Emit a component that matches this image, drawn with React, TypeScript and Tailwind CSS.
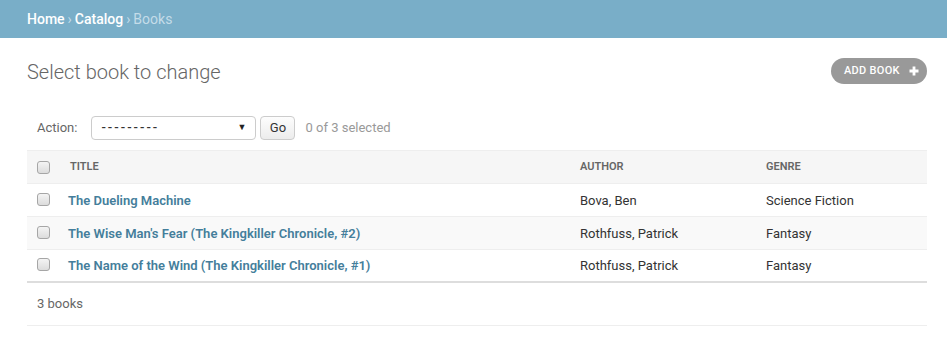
import React from "react";

const Check = () => (
  <span className="inline-block w-[13px] h-[13px] rounded-[3px] border border-[#a6a6a6] bg-gradient-to-b from-[#f4f4f4] to-[#dcdcdc]" />
);

const rows = [
  { title: "The Dueling Machine", author: "Bova, Ben", genre: "Science Fiction" },
  { title: "The Wise Man's Fear (The Kingkiller Chronicle, #2)", author: "Rothfuss, Patrick", genre: "Fantasy" },
  { title: "The Name of the Wind (The Kingkiller Chronicle, #1)", author: "Rothfuss, Patrick", genre: "Fantasy" },
];

export default function App() {
  return (
    <div className="w-[947px] h-[337px] bg-white font-['Roboto',sans-serif] overflow-hidden">
      <div className="h-[38px] bg-[#79aec8] px-[27px] flex items-center text-[14px] text-white">
        <span className="font-medium">Home</span>
        <span className="text-[#c4dce8] mx-[3px]">›</span>
        <span className="font-medium">Catalog</span>
        <span className="text-[#c4dce8] mx-[3px]">›</span>
        <span className="text-[#c4dce8]">Books</span>
      </div>
      <div className="pl-[27px] pr-[20px]">
        <div className="mt-[20px] h-[26px] flex items-center justify-between">
          <h1 className="text-[20px] font-light text-[#666] leading-none mt-[2px]">Select book to change</h1>
          <div className="h-[26px] w-[96px] rounded-full bg-[#999] flex items-center pl-[13px] text-[11px] font-medium text-white tracking-[0.3px]">
            <span>ADD BOOK</span>
            <svg className="ml-[9px]" width="10" height="10" viewBox="0 0 10 10">
              <path d="M5 0.5v9M0.5 5h9" stroke="white" strokeWidth="2.8" />
            </svg>
          </div>
        </div>
        <div className="mt-[32px] h-[24px] flex items-center px-[10px] text-[13px]">
          <span className="text-[#666]">Action:</span>
          <div className="ml-[14px] w-[165px] h-[24px] border border-[#ccc] rounded-[4px] flex items-center justify-between px-[9px] text-[#333]">
            <span className="tracking-[2px] font-medium">---------</span>
            <span className="text-[9px] text-[#222]">▼</span>
          </div>
          <div className="ml-[4px] w-[35px] h-[24px] border border-[#ccc] rounded-[4px] bg-gradient-to-b from-[#fdfdfd] to-[#ececec] flex items-center justify-center text-[#333]">
            Go
          </div>
          <span className="ml-[10px] text-[#999]">0 of 3 selected</span>
        </div>
        <div className="mt-[10px]">
          <div className="grid grid-cols-[43px_510px_186px_1fr] h-[34px] items-center bg-[#f6f6f6] border-t border-b border-[#eee] text-[11px] font-semibold text-[#666] uppercase">
            <div className="pl-[10px] flex items-center"><Check /></div>
            <div>Title</div>
            <div>Author</div>
            <div>Genre</div>
          </div>
          {rows.map((r, i) => (
            <div
              key={r.title}
              className={`grid grid-cols-[43px_510px_186px_1fr] h-[33px] items-center text-[13px] text-[#333] ${i === 2 ? "border-b-2 border-[#ddd]" : "border-b border-[#eee]"} ${i === 1 ? "bg-[#f9f9f9]" : "bg-white"}`}
            >
              <div className="pl-[10px] flex items-center -mt-[2px]"><Check /></div>
              <div className="font-semibold text-[#447e9b] -ml-[2px] mt-[1px]">{r.title}</div>
              <div className="mt-[1px]">{r.author}</div>
              <div className="mt-[1px]">{r.genre}</div>
            </div>
          ))}
          <div className="h-[43px] flex items-center px-[10px] text-[13px] text-[#666] border-b border-[#eee]">
            3 books
          </div>
        </div>
      </div>
    </div>
  );
}
